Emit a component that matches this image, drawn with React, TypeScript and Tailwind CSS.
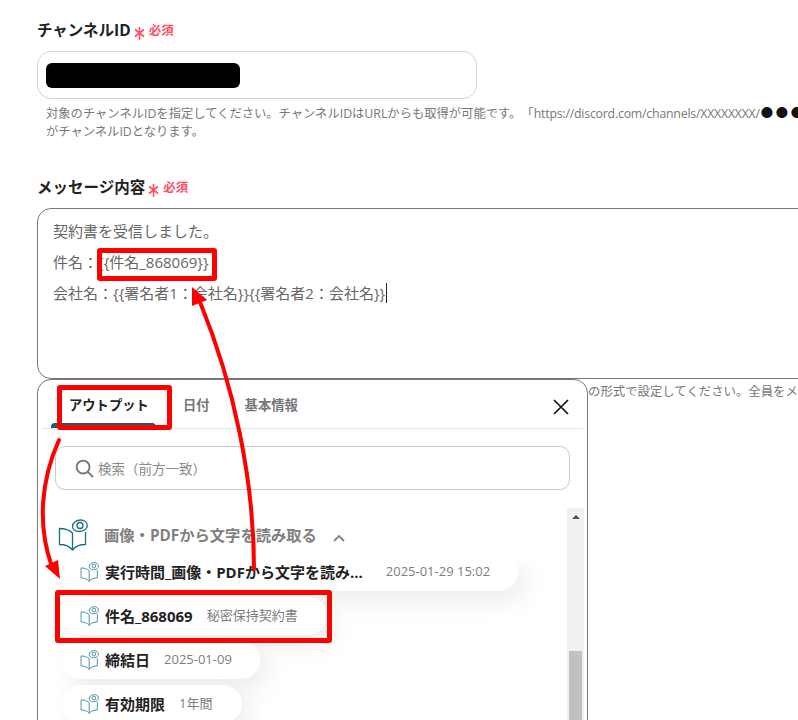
import React from 'react';

const FONT = "font-['Open_Sans','Noto_Sans_CJK_JP',sans-serif]";

function BookIcon({ className, strokeWidth = 1.3 }: { className: string; strokeWidth?: number }) {
  return (
    <svg viewBox="0 0 30 32" fill="none" stroke="currentColor" strokeWidth={strokeWidth} strokeLinejoin="round" className={className}>
      <path d="M14.500 14C11.500 11 6.500 9.500 1.500 9.500V25.500C6.500 25.500 11.500 27 14.500 31C17.500 27 22.500 25.500 27.500 25.500V13" />
      <path d="M14.500 14V31" />
      <path d="M14.500 7.500C14.500 3.500 18.500 1 22.500 1C26.500 1 29.300 3.500 29.300 6.500C29.300 10 25.500 12.500 21.500 12.500C17.500 12.500 14.500 10.500 14.500 7.500Z" fill="#fff" />
      <circle cx="22" cy="6.500" r="3" />
    </svg>
  );
}

function Required() {
  return (
    <span className="ml-[3px] flex items-center pt-px text-[12.5px] font-bold text-[#ff4d63]">
      <svg viewBox="0 0 11 13" stroke="#ff4d63" strokeWidth="1.600" className="mr-[4px] mt-[3px] h-[13px] w-[11px]">
        <path d="M5.500 0V13M1 2.500L10 9.500M10 2.500L1 9.500" />
      </svg>
      必須
    </span>
  );
}

function OutputRow({ label, value, width, gap = 'ml-[14px]' }: { label: string; value: string; width: string; gap?: string }) {
  return (
    <div className={`flex h-[38px] shrink-0 items-center rounded-full bg-white pl-[18px] shadow-[8px_10px_24px_rgba(0,0,0,0.08)] ${width}`}>
      <BookIcon className="h-[20px] w-[19px] shrink-0 text-[#4f93a6]" strokeWidth={1.6} />
      <span className="ml-[6px] whitespace-nowrap text-[15px] font-bold text-[#222]">{label}</span>
      <span className={`whitespace-nowrap text-[13px] text-[#7d7d7d] ${gap}`}>{value}</span>
    </div>
  );
}

export default function App() {
  return (
    <div className={`relative h-[720px] w-[798px] overflow-hidden bg-white text-[#333] [text-spacing-trim:space-all] ${FONT}`}>
      <div className="pl-[37px] pt-[21px]">
        {/* チャンネルID */}
        <div className="flex h-[20px] items-center">
          <span className="text-[15.5px] font-bold text-[#222]">チャンネルID</span>
          <Required />
        </div>
        <div className="mt-[10px] flex h-[48px] w-[440px] items-center rounded-[14px] border border-[#d0d5da] px-[6px]">
          <div className="ml-[2px] h-[25px] w-[194px] rounded-[6px] bg-black" />
        </div>
        <div className="mt-[6px] pl-[9px] text-[12.3px] leading-[18px] text-[#777]">
          <p className="whitespace-nowrap">
            対象のチャンネルIDを指定してください。チャンネルIDはURLからも取得が可能です。「
            <span className="tracking-[-0.2px]">https://discord.com/channels/XXXXXXXX/</span>
            <span className="ml-[1px] tracking-[2.700px] text-[#111]">●●●</span>
          </p>
          <p>がチャンネルIDとなります。</p>
        </div>

        {/* メッセージ内容 */}
        <div className="mt-[37px] flex h-[20px] items-center">
          <span className="text-[15.5px] font-bold text-[#222]">メッセージ内容</span>
          <Required />
        </div>
        <div className="mt-[10px] h-[171px] w-[800px] rounded-[14px] border border-[#777] pl-[15px] pt-[7px] text-[15px] leading-[31px] text-[#666]">
          <p>契約書を受信しました。</p>
          <p>件名：{'{{'}件名_868069{'}}'}</p>
          <p className="flex">
            会社名：{'{{'}署名者1：会社名{'}}{{'}署名者2：会社名{'}}'}
            <span className="ml-[1px] mt-[5px] h-[20px] w-px bg-[#222]" />
          </p>
        </div>
        <p className="whitespace-nowrap pl-[551px] pt-[4px] text-[12.4px] leading-[18px] text-[#777]">の形式で設定してください。全員をメンションする場合</p>
      </div>

      {/* 出力の選択パネル */}
      <div className="absolute left-[37px] top-[379px] flex h-[380px] w-[551px] flex-col rounded-t-[14px] border border-[#777] bg-white">
        <div className="relative mx-[4px] flex h-[49px] shrink-0 items-center border-b border-[#e5e5e5]">
          <div className="relative flex h-full w-[114px] items-center pl-[27px] pt-[4px] text-[13.3px] font-bold whitespace-nowrap text-[#222]">
            アウトプット
            <span className="absolute bottom-0 left-[9px] right-0 h-[5px] rounded-t-[4px] bg-[#155f78]" />
          </div>
          <span className="ml-[27px] pt-[4px] text-[13.3px] font-bold text-[#777]">日付</span>
          <span className="ml-[35px] pt-[4px] text-[13.3px] font-bold text-[#777]">基本情報</span>
          <svg viewBox="0 0 16 16" stroke="#111" strokeWidth="1.700" className="absolute right-[14px] top-[19px] h-[16px] w-[16px]">
            <path d="M1 1l14 14M15 1L1 15" />
          </svg>
        </div>

        <div className="mx-[17px] mt-[17px] flex h-[44px] shrink-0 items-center rounded-[10px] border border-[#c9c9c9] pl-[19px] pt-[2px] text-[13.5px] text-[#8a8a8a]">
          <svg viewBox="0 0 20 20" fill="none" stroke="#777" strokeWidth="2" className="mr-[4px] -mt-[2px] h-[19px] w-[19px]">
            <circle cx="8.500" cy="8.500" r="6.800" />
            <path d="M13.500 13.500L18.500 18.500" strokeLinecap="round" />
          </svg>
          検索（前方一致）
        </div>

        <div className="mt-[18px] flex min-h-0 flex-1 pl-[17px] pr-[3px]">
          <div className="flex min-w-0 flex-1 flex-col overflow-hidden">
            <div className="relative z-10 flex h-[53px] shrink-0 items-start bg-white pl-[3px] pt-[11px]">
              <BookIcon className="h-[32px] w-[30px] shrink-0 text-[#1a6d85]" />
              <span className="ml-[16px] mt-[5px] whitespace-nowrap text-[15.3px] font-bold text-[#808080]">画像・PDFから文字を読み取る</span>
              <svg viewBox="0 0 12 8" fill="none" stroke="#808080" strokeWidth="1.800" className="ml-[16px] mt-[15px] h-[8px] w-[12px] shrink-0">
                <path d="M1 7l5-5 5 5" />
              </svg>
            </div>
            <div className="-mt-[8px] flex flex-col gap-[6px] pl-[7px]">
              <OutputRow label="実行時間_画像・PDFから文字を読み..." value="2025-01-29 15:02" width="w-[456px]" gap="ml-[23px]" />
              <OutputRow label="件名_868069" value="秘密保持契約書" width="w-[265px]" />
              <OutputRow label="締結日" value="2025-01-09" width="w-[198px]" />
              <OutputRow label="有効期限" value="1年間" width="w-[180px]" />
            </div>
          </div>
          <div className="flex w-[17px] shrink-0 flex-col items-center bg-[#f1f1f1]">
            <span className="mt-[7px] h-0 w-0 border-x-[4px] border-b-[4px] border-x-transparent border-b-[#505050]" />
            <span className="mt-[132px] h-[80px] w-[13px] bg-[#c1c1c1]" />
          </div>
        </div>
      </div>

      {/* 注釈の赤枠 */}
      <div className="absolute left-[97px] top-[248px] z-20 h-[33px] w-[120px] rounded-[3px] border-[5px] border-[#f00]" />
      <div className="absolute left-[57px] top-[385px] z-20 h-[45px] w-[115px] rounded-[3px] border-[5px] border-[#f00]" />
      <div className="absolute left-[55px] top-[590px] z-20 h-[53px] w-[277px] rounded-[3px] border-[5px] border-[#f00]" />

      {/* 注釈の矢印 */}
      <svg viewBox="0 0 798 720" fill="none" className="pointer-events-none absolute left-0 top-0 z-20 h-[720px] w-[798px]">
        <path d="M59 440C41 480 37 525 52 567" stroke="#f00" strokeWidth="4" strokeLinecap="round" />
        <path d="M60 579L45 566L58 560Z" fill="#f00" />
        <path d="M254 569C254 480 234 385 200 302" stroke="#f00" strokeWidth="4" strokeLinecap="round" />
        <path d="M192 287L192 306L207 300Z" fill="#f00" />
      </svg>
    </div>
  );
}
